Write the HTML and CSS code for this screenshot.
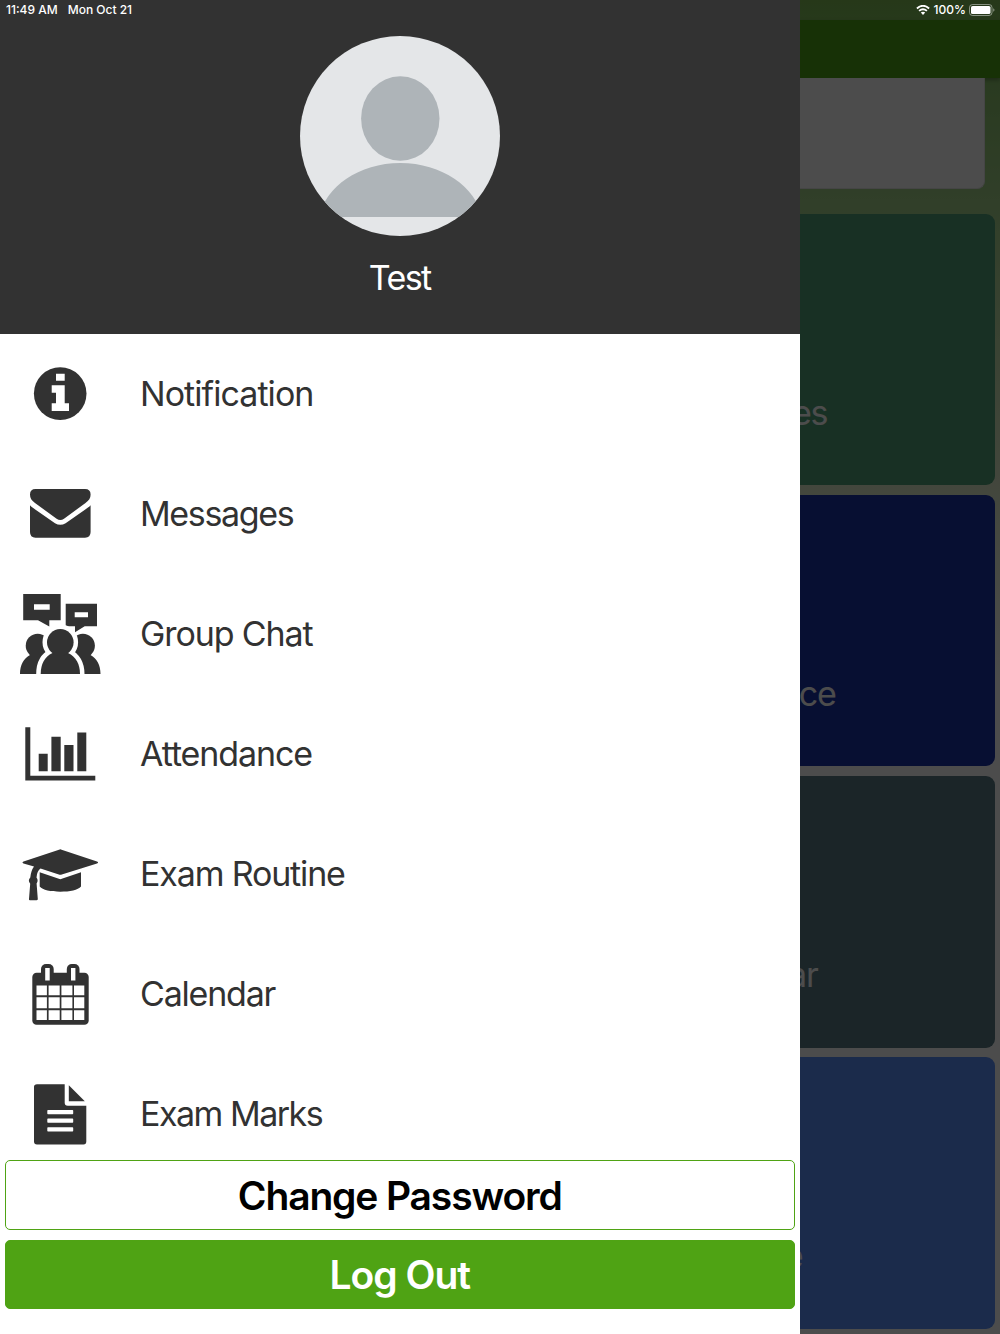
FILE: index.html
```html
<!DOCTYPE html>
<html lang="en">
	<head>
		<title>School App</title>
		<meta charset="utf-8" />
		<link rel="stylesheet" href="styles.css">
	</head>
	<body>
		<div class="dashboard">
			<div class="app-bar"></div>
			<div class="banner"></div>
			<div class="cards">
				<div class="card card-messages">Messages</div>
				<div class="card card-attendance">Attendance</div>
				<div class="card card-calendar">Calendar</div>
				<div class="card card-notice">Notice</div>
			</div>
		</div>
		<div class="scrim"></div>

		<div class="drawer">
			<div class="profile">
				<svg class="avatar" viewBox="0 0 200 200">
					<clipPath id="avatarClip"><circle cx="100" cy="100" r="100" /></clipPath>
					<g clip-path="url(#avatarClip)">
						<rect width="200" height="200" fill="#e4e6e8" />
						<ellipse cx="100.3" cy="82.5" rx="39.2" ry="42.3" fill="#aeb4b8" />
						<path d="M19 181C25 151 59 127 100.3 127S176 151 182 181Z" fill="#aeb4b8" />
					</g>
				</svg>
				<div class="profile-name">Test</div>
			</div>

			<div class="menu">
				<div class="menu-item">
					<svg class="menu-icon" viewBox="0 0 80 80">
						<circle cx="40.2" cy="39.6" r="26.3" />
						<path class="cut" d="M36 19.7h8.7v7H36zM31.7 31.3h13v18H49V57H31.7v-7.7H36V38.7h-4.3z" />
					</svg>
					<span class="label-notification">Notification</span>
				</div>
				<div class="menu-item">
					<svg class="menu-icon" viewBox="0 0 80 80">
						<path d="M15.5 15H65q5.6 0 5.6 5.5C70.6 24 69 26.5 65.5 29L44 44.700q-3.700 2.600-7.400 0L15 29C11.500 26.500 10 24 10 20.500Q10 15 15.500 15Z" />
						<path d="M10 31.300q1 1.200 2.500 2.300L35 49.200q5.300 3.200 10.600 0L68 33.600q1.600-1.100 2.600-2.300V58q0 5.700-5.600 5.700H15.500Q10 63.700 10 58Z" />
					</svg>
					<span class="label-messages">Messages</span>
				</div>
				<div class="menu-item">
					<svg class="menu-icon" viewBox="0 0 80 80">
						<path d="M3.200 0h37.500v26.300H29.300v6.200L18 26.300H3.200zM45.700 9.700H77v22.600H64.700L55 38.300v-6h-9.300z" />
						<path class="cut" d="M14 10.300h15.700v5.400H14zM54.700 18.300H68v5H54.700z" />
						<circle cx="17.700" cy="51.800" r="12" />
						<circle cx="62.900" cy="51.800" r="12" />
						<path d="M0 80C0 71 3.500 64.500 10 61h16v19zM80.500 80C80.500 71 77 64.500 70.500 61h-16v19z" />
						<path class="halo" d="M20.700 80C20.700 70.500 24.500 62.500 32.500 59H48C56 62.500 60 70.500 60 80Z" />
						<circle class="halo" cx="40.300" cy="48.300" r="13.300" />
						<path d="M20.700 80C20.700 70.500 24.500 62.500 32.500 59H48C56 62.500 60 70.500 60 80Z" />
						<circle cx="40.300" cy="48.300" r="13.300" />
					</svg>
					<span class="label-chat">Group Chat</span>
				</div>
				<div class="menu-item">
					<svg class="menu-icon" viewBox="0 0 80 80">
						<path d="M5.300 13.200h5v48.500h65v4.700h-70z" />
						<path d="M18.700 39.800h9v17.500h-9zM31.400 22.700h9.300v34.600h-9.300zM44.300 31h9.200v26.300h-9.200zM57.300 18.500h9v38.800h-9z" />
					</svg>
					<span class="label-attendance">Attendance</span>
				</div>
				<div class="menu-item">
					<svg class="menu-icon" viewBox="0 0 80 80">
						<path d="M39 15.700q1.300-.7 2.600 0L77 27.500q2.200 1 0 2L41.800 40.600q-1.500.5-3 0L20.500 34.600Q17 37 16.500 43.500q2.200 3 .1 6L17.800 65q0 1.200-1.300 1.200H10Q8.700 66.200 9 65l1.200-15.300Q7.500 46.500 10.300 43.500 11 36.500 14 32.500L3.500 29.500q-2-1 0-2z" />
						<path d="M19.700 38.300 40.300 45.200 61 38.300V52.500C58 56 50 57.700 40.300 57.700S22.700 56 19.700 52.500Z" />
					</svg>
					<span class="label-routine">Exam Routine</span>
				</div>
				<div class="menu-item">
					<svg class="menu-icon" viewBox="0 0 80 80">
						<rect x="12.300" y="18.700" width="56.400" height="52" rx="4.300" />
						<rect x="21" y="10" width="12.700" height="21" rx="5" />
						<rect x="46.800" y="10" width="12.700" height="21" rx="5" />
						<path class="cut" d="M25.200 14h4.500v12.500h-4.500zM51 14h4.400v12.500H51z" />
						<path class="cut" d="M16.500 31.500h10.400v9.800H16.500zM28.600 31.500h11.100v9.800H28.600zM41.400 31.500h11v9.800h-11zM54 31.500h10.300v9.800H54zM16.500 43.300h10.400v11H16.500zM28.600 43.300h11.100v11H28.600zM41.400 43.300h11v11h-11zM54 43.300h10.300v11H54zM16.500 56.200h10.400V66H16.500zM28.600 56.200h11.100V66H28.600zM41.400 56.200h11V66h-11zM54 56.200h10.300V66H54z" />
					</svg>
					<span class="label-calendar">Calendar</span>
				</div>
				<div class="menu-item">
					<svg class="menu-icon" viewBox="0 0 80 80">
						<path d="M17 10.200h27.700v18.500q0 3 3 3h18.600V67.500q0 2.900-2.800 2.900H17q-3 0-3-2.900V13q0-2.800 3-2.800z" />
						<path d="M48.800 11.200 64.800 27.300h-16z" />
						<path class="cut" d="M28 36h24.500q.7 0 .7.800v2.800q0 .7-.7.700H28q-.7 0-.7-.7v-2.800q0-.8.700-.8zM28 44.500h24.500q.7 0 .7.800v2.800q0 .7-.7.700H28q-.7 0-.7-.7v-2.800q0-.8.700-.8zM28 53.200h24.500q.7 0 .7.800v2.800q0 .7-.7.700H28q-.7 0-.7-.7V54q0-.8.700-.8z" />
					</svg>
					<span class="label-marks">Exam Marks</span>
				</div>
			</div>

			<div class="actions">
				<button class="btn btn-password">Change Password</button>
				<button class="btn btn-logout">Log Out</button>
			</div>
		</div>

		<div class="status-bar">
			<span class="status-time">11:49 AM</span>
			<span class="status-date">Mon Oct 21</span>
			<svg class="wifi" viewBox="0 0 14 10">
				<path d="M.9 3.500Q7-2 13.100 3.500M3.100 5.900Q7 2.500 10.900 5.900" fill="none" stroke="#fff" stroke-width="1.800" />
				<path d="M4.800 7.600Q7 5.700 9.200 7.600L7 9.900Z" fill="#fff" />
			</svg>
			<span class="status-percent">100%</span>
			<svg class="battery" viewBox="0 0 26 12">
				<rect x=".5" y=".5" width="22.500" height="11" rx="3" fill="none" stroke="#fff" stroke-opacity=".45" />
				<rect x="2" y="2" width="19.500" height="8" rx="1.600" fill="#fff" />
				<path d="M24.200 4.200q1.300.6 1.300 1.800t-1.300 1.800z" fill="#fff" fill-opacity=".45" />
			</svg>
		</div>
	</body>
</html>
```
FILE: styles.css
```css
* {
	padding: 0;
	margin: 0;
	box-sizing: border-box;
}

body {
	position: relative;
	width: 1000px;
	height: 1334px;
	overflow: hidden;
	font-family: Inter, "Liberation Sans", sans-serif;
	background: #fff;
}

/* Dashboard behind the drawer */
.dashboard {
	width: 100%;
	height: 100%;
	padding-top: 20px;
	overflow: hidden;
	background: linear-gradient(#7fbd55 0, #8bc36c 78px, #a3d289 200px, #dfeccb 480px, #fff 690px);
}

.app-bar {
	height: 58px;
	background: #4fa314;
	box-shadow: 0 2px 4px rgba(0, 0, 0, 0.3);
}

.banner {
	height: 111px;
	margin: 0 15px 24.7px;
	background: #fff;
	border: 1px solid #e6e6e6;
	border-top: 0;
	border-radius: 0 0 8px 8px;
}

.cards {
	display: flex;
	flex-direction: column;
	align-items: flex-end;
	gap: 9.4px;
	padding-right: 5px;
}

.card {
	display: flex;
	justify-content: center;
	width: 490px;
	height: 271.7px;
	padding-top: 179px;
	border-radius: 9px;
	color: #fff;
	font-size: 34px;
	line-height: 40px;
	letter-spacing: -1.2px;
}
.card-messages {
	background: #50a078;
}
.card-attendance {
	background: #1832a8;
}
.card-calendar {
	background: #5a7d87;
}
.card-notice {
	background: #5a91fa;
	letter-spacing: 0.6px;
}

.scrim {
	position: absolute;
	inset: 0;
	background: rgba(0, 0, 0, 0.7);
}

/* Drawer */
.drawer {
	position: absolute;
	top: 0;
	left: 0;
	width: 799.5px;
	height: 100%;
	background: #fff;

	display: flex;
	flex-direction: column;
}

.profile {
	height: 333.5px;
	padding-top: 36px;
	background: #323232;

	display: flex;
	flex-direction: column;
	align-items: center;
	gap: 22px;
}

.avatar {
	width: 200px;
	height: 200px;
}

.profile-name {
	color: #fff;
	font-size: 34px;
	line-height: 40px;
	letter-spacing: -1.6px;
}

.menu {
	flex: 1;
	min-height: 0;
	overflow: hidden;
}

.menu-item {
	height: 120px;
	padding-left: 20px;
	color: #323232;
	font-size: 34px;

	display: flex;
	align-items: center;
	gap: 40px;
}

.menu-icon {
	width: 80px;
	height: 80px;
	fill: #323232;
	overflow: visible;
}

.label-notification {
	letter-spacing: -0.95px;
}
.label-messages {
	letter-spacing: -1.35px;
}
.label-chat,
.label-attendance {
	letter-spacing: -1.1px;
}
.label-routine {
	letter-spacing: -1.15px;
}
.label-calendar {
	letter-spacing: -1.2px;
}
.label-marks {
	letter-spacing: -1.5px;
}

.cut {
	fill: #fff;
}

.halo {
	fill: #fff;
	stroke: #fff;
	stroke-width: 9;
}

.actions {
	padding: 0 5px 25px;

	display: flex;
	flex-direction: column;
	gap: 10px;
}

.btn {
	height: 69.5px;
	border: 1px solid #4fa314;
	border-radius: 5px;
	font-family: inherit;
	font-size: 39px;
	font-weight: 600;
	letter-spacing: -1px;
}
.btn-password {
	padding-top: 2px;
	background: #fff;
	color: #000;
	letter-spacing: -1.15px;
}
.btn-logout {
	background: #4fa314;
	color: #fff;
}

/* Status bar */
.status-bar {
	position: absolute;
	top: 0;
	left: 0;
	width: 100%;
	height: 19px;
	padding: 0 5px 0 6px;
	color: #fff;
	font-size: 12px;
	font-weight: 500;

	display: flex;
	align-items: center;
}

.status-date {
	margin-left: 10px;
}

.wifi {
	width: 14px;
	height: 10px;
	margin-left: auto;
}

.status-percent {
	margin: 0 3px 0 4px;
}

.battery {
	width: 26px;
	height: 12px;
}
```
